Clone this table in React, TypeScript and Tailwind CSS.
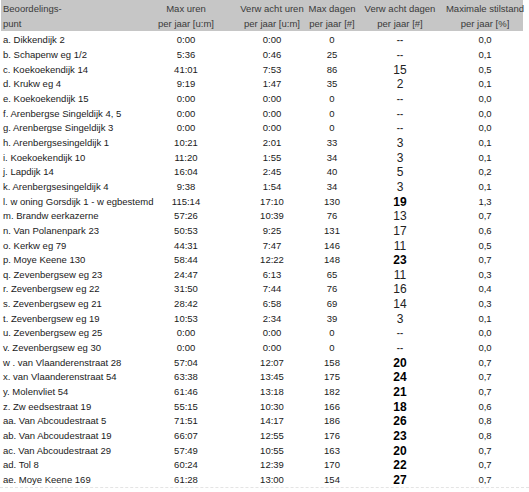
const rows: [string, string, string, string, string, string][] = [
  ["a. Dikkendijk 2", "0:00", "0:00", "0", "--", "0,0"],
  ["b. Schapenw eg 1/2", "5:36", "0:46", "25", "--", "0,1"],
  ["c. Koekoekendijk 14", "41:01", "7:53", "86", "15", "0,5"],
  ["d. Krukw eg 4", "9:19", "1:47", "35", "2", "0,1"],
  ["e. Koekoekendijk 15", "0:00", "0:00", "0", "--", "0,0"],
  ["f. Arenbergse Singeldijk 4, 5", "0:00", "0:00", "0", "--", "0,0"],
  ["g. Arenbergse Singeldijk 3", "0:00", "0:00", "0", "--", "0,0"],
  ["h. Arenbergsesingeldijk 1", "10:21", "2:01", "33", "3", "0,1"],
  ["i. Koekoekendijk 10", "11:20", "1:55", "34", "3", "0,1"],
  ["j. Lapdijk 14", "16:04", "2:45", "40", "5", "0,2"],
  ["k. Arenbergsesingeldijk 4", "9:38", "1:54", "34", "3", "0,1"],
  ["l. w oning Gorsdijk 1 - w egbestemd", "115:14", "17:10", "130", "19", "1,3"],
  ["m. Brandw eerkazerne", "57:26", "10:39", "76", "13", "0,7"],
  ["n. Van Polanenpark 23", "50:53", "9:25", "131", "17", "0,6"],
  ["o. Kerkw eg 79", "44:31", "7:47", "146", "11", "0,5"],
  ["p. Moye Keene 130", "58:44", "12:22", "148", "23", "0,7"],
  ["q. Zevenbergsew eg 23", "24:47", "6:13", "65", "11", "0,3"],
  ["r. Zevenbergsew eg 22", "31:50", "7:44", "76", "16", "0,4"],
  ["s. Zevenbergsew eg 21", "28:42", "6:58", "69", "14", "0,3"],
  ["t. Zevenbergsew eg 19", "10:53", "2:34", "39", "3", "0,1"],
  ["u. Zevenbergsew eg 25", "0:00", "0:00", "0", "--", "0,0"],
  ["v. Zevenbergsew eg 30", "0:00", "0:00", "0", "--", "0,0"],
  ["w . van Vlaanderenstraat 28", "57:04", "12:07", "158", "20", "0,7"],
  ["x. van Vlaanderenstraat 54", "63:38", "13:45", "175", "24", "0,7"],
  ["y. Molenvliet 54", "61:46", "13:18", "182", "21", "0,7"],
  ["z. Zw eedsestraat 19", "55:15", "10:30", "166", "18", "0,6"],
  ["aa. Van Abcoudestraat 5", "71:51", "14:17", "186", "26", "0,8"],
  ["ab. Van Abcoudestraat 19", "66:07", "12:55", "176", "23", "0,8"],
  ["ac. Van Abcoudestraat 29", "57:49", "10:55", "163", "20", "0,7"],
  ["ad. Tol 8", "60:24", "12:39", "170", "22", "0,7"],
  ["ae. Moye Keene 169", "61:28", "13:00", "154", "27", "0,7"],
];

// column widths picked so that each centred cell sits on the reference's column centre
const grid = "grid grid-cols-[150px_70px_102px_18px_118px_52px]";

function Cell({ children, className = "" }: { children: React.ReactNode; className?: string }) {
  return <div className={`flex justify-center whitespace-nowrap ${className}`}>{children}</div>;
}

function Expected({ value }: { value: string }) {
  if (value === "--") return <span className="text-[9.5px] font-bold text-[#333]">--</span>;
  const high = parseInt(value) >= 18;
  return (
    <span className={`text-[12px] leading-[14px] ${high ? "font-bold text-black" : "text-[#222]"}`}>
      {value}
    </span>
  );
}

export default function App() {
  return (
    <div className="h-[492px] w-[529px] bg-white [font-family:'Liberation_Sans',Arial,sans-serif] text-[9.5px] text-[#1a1a1a]">
      {/* Header */}
      <div className="h-[33px] pl-[1px] pr-[6px]">
        <div className={`${grid} h-[31px] bg-[#c6c6c6] pt-[2px] leading-[14.5px] text-[#3a3a3a]`}>
          <div className="pl-[2px]">
            <div>Beoordelings-</div>
            <div>punt</div>
          </div>
          <Cell className="flex-col items-center">
            <div>Max uren</div>
            <div>per jaar [u:m]</div>
          </Cell>
          <Cell className="flex-col items-center">
            <div>Verw acht uren</div>
            <div>per jaar [u:m]</div>
          </Cell>
          <Cell className="flex-col items-center">
            <div>Max dagen</div>
            <div>per jaar [#]</div>
          </Cell>
          <Cell className="flex-col items-center">
            <div>Verw acht dagen</div>
            <div>per jaar [#]</div>
          </Cell>
          <Cell className="flex-col items-center">
            <div>Maximale stilstand</div>
            <div>per jaar [%]</div>
          </Cell>
        </div>
      </div>

      {/* Rows */}
      <div className="border-b border-dashed border-[#e4e4e4] pl-[1px] pr-[6px]">
        {rows.map((r) => (
          <div key={r[0]} className={`${grid} h-[14.67px] items-center leading-[14px]`}>
            <div className="whitespace-nowrap pl-[2px]">{r[0]}</div>
            <Cell>{r[1]}</Cell>
            <Cell>{r[2]}</Cell>
            <Cell>{r[3]}</Cell>
            <Cell>
              <Expected value={r[4]} />
            </Cell>
            <Cell>{r[5]}</Cell>
          </div>
        ))}
      </div>
    </div>
  );
}
